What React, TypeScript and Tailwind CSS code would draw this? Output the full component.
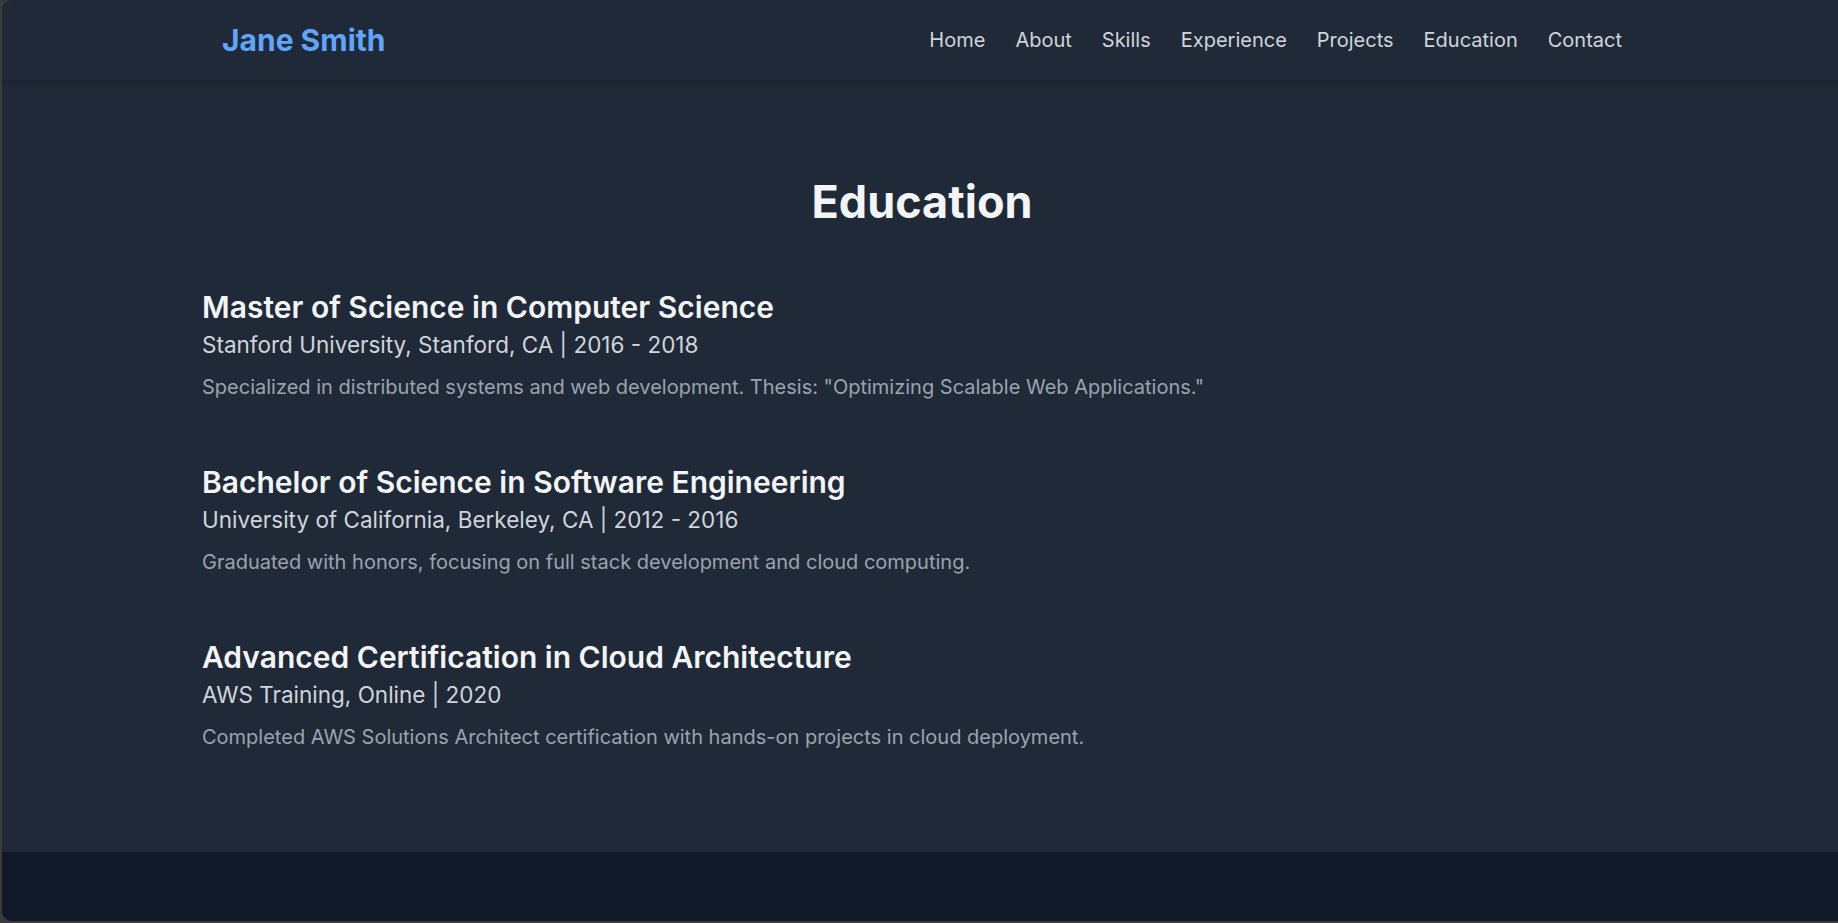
import React from 'react';

interface Degree {
  title: string;
  school: string;
  years: string;
  note: string;
}

const navLinks = ['Home', 'About', 'Skills', 'Experience', 'Projects', 'Education', 'Contact'];

const degrees: Degree[] = [
  {
    title: 'Master of Science in Computer Science',
    school: 'Stanford University, Stanford, CA',
    years: '2016 - 2018',
    note: 'Specialized in distributed systems and web development. Thesis: "Optimizing Scalable Web Applications."',
  },
  {
    title: 'Bachelor of Science in Software Engineering',
    school: 'University of California, Berkeley, CA',
    years: '2012 - 2016',
    note: 'Graduated with honors, focusing on full stack development and cloud computing.',
  },
  {
    title: 'Advanced Certification in Cloud Architecture',
    school: 'AWS Training, Online',
    years: '2020',
    note: 'Completed AWS Solutions Architect certification with hands-on projects in cloud deployment.',
  },
];

export default function App() {
  return (
    <div className="h-[923px] w-full overflow-hidden bg-[#3b3b3b] pl-[2px] pb-[2px] font-['Inter',_'Liberation_Sans',_sans-serif]">
      <div className="flex h-full flex-col overflow-hidden rounded-tl-[10px] rounded-bl-[10px] bg-[#1f2937]">
        {/* header */}
        <header className="h-[80px] shrink-0 bg-[#1f2937] shadow-[0_2px_6px_rgba(0,0,0,0.18)] relative z-10">
          <div className="ml-[200px] flex h-full w-[1440px] items-center justify-between px-[20px]">
            <a className="text-[30px] font-bold leading-[40px] text-[#60a5fa]">Jane Smith</a>
            <nav className="flex gap-[30px]">
              {navLinks.map((link) => (
                <a key={link} className="text-[20px] leading-[30px] text-[#d1d5db]">
                  {link}
                </a>
              ))}
            </nav>
          </div>
        </header>

        {/* education */}
        <section className="shrink-0 pt-[97px] pb-[100px]">
          <div className="ml-[200px] w-[1440px]">
            <h2 className="mb-[60px] text-center text-[45px] font-bold leading-[50px] text-[#f3f4f6]">Education</h2>
            <div className="flex flex-col gap-[60px]">
              {degrees.map((d) => (
                <div key={d.title}>
                  <h3 className="text-[30px] font-semibold leading-[40px] text-[#f3f4f6]">{d.title}</h3>
                  <p className="text-[22.5px] leading-[35px] text-[#d1d5db]">
                    {d.school} | {d.years}
                  </p>
                  <p className="mt-[10px] text-[20px] leading-[30px] text-[#9ca3af]">{d.note}</p>
                </div>
              ))}
            </div>
          </div>
        </section>

        <footer className="flex-1 bg-[#111827]" />
      </div>
    </div>
  );
}
